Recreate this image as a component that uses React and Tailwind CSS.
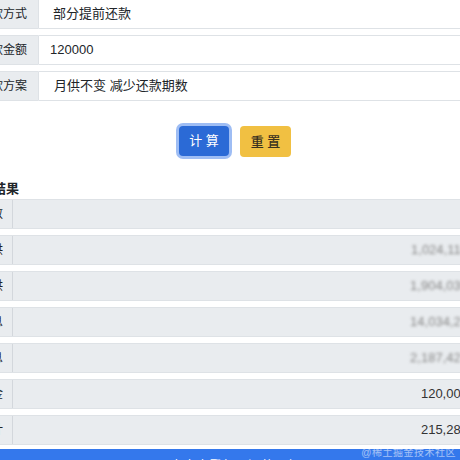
const formRows = [
  { label: "还款方式", value: "部分提前还款", pad: "pl-[14px]" },
  { label: "还款金额", value: "120000", pad: "pl-[11px]" },
  { label: "还款方案", value: "月供不变 减少还款期数", pad: "pl-[15px]" },
];

const resultRows = [
  { label: "期数", value: "" },
  { label: "月供", value: "1,024,118.63", blur: true },
  { label: "月供", value: "1,904,035.29", blur: true },
  { label: "利息", value: "14,034,271.8", blur: true },
  { label: "利息", value: "2,187,427.65", blur: true },
  { label: "本金", value: "120,000.00" },
  { label: "总计", value: "215,287.43" },
];

function FormRow({ label, value, pad }) {
  return (
    <div className="flex h-[30px]">
      <div className="flex items-center px-[11px] bg-[#e9ecef] border border-[#dee2e6] rounded-l-[4px] text-[12px] text-[#212529] whitespace-nowrap">
        {label}
      </div>
      <div className={`flex-1 flex items-center ${pad} border border-l-0 border-[#dee2e6] rounded-r-[4px] bg-white text-[13px] text-[#212529]`}>
        {value}
      </div>
    </div>
  );
}

function ResultRow({ label, value, blur }) {
  return (
    <div className="flex h-[30px] bg-[#e9ecef] border border-[#dee2e6] rounded-[4px]">
      <div className="w-[45px] flex items-center justify-end pr-[9px] border-r border-[#d3d7dc] text-[12px] text-[#212529]">
        {label}
      </div>
      <div className="flex-1 flex items-center justify-end pr-[16px] text-[13px] text-[#333]">
        {blur ? <span className="blur-[1.4px] text-[#888]">{value}</span> : value}
      </div>
    </div>
  );
}

export default function App() {
  return (
    <div
      className="relative w-[460px] h-[460px] overflow-hidden bg-white"
      style={{ fontFamily: '"Liberation Sans", "Noto Sans CJK SC", sans-serif' }}
    >
      <div className="-ml-[33px] -mt-[1px] w-[536px]">
        <div className="flex flex-col gap-[6px]">
          {formRows.map((r) => (
            <FormRow key={r.label} {...r} />
          ))}
        </div>

        <div className="flex justify-center gap-[11px] mt-[25px]">
          <button className="w-[50px] h-[30px] rounded-[4px] bg-[#2b6ad6] text-white text-[13px] ring-[3px] ring-[#9ebdf4]">
            计 算
          </button>
          <button className="w-[51px] h-[31px] rounded-[4px] bg-[#f1c042] text-[#3b3220] text-[13px] font-medium">
            重 置
          </button>
        </div>

        <h3 className="mt-[22px] h-[20px] leading-[20px] text-[13px] font-bold text-[#212529]">计算结果</h3>

        <div className="flex flex-col gap-[6px]">
          {resultRows.map((r, i) => (
            <ResultRow key={i} {...r} />
          ))}
        </div>

        <div className="mt-[4px] h-[40px] bg-[#3478ec] flex justify-center pt-[7px] text-[13px] text-white">
          点击查看每月还款明细
        </div>
      </div>

      <div className="absolute right-[4px] top-[447px] text-[10px] leading-[12px] text-white/55 tracking-[0.5px]">
        @稀土掘金技术社区
      </div>
    </div>
  );
}
